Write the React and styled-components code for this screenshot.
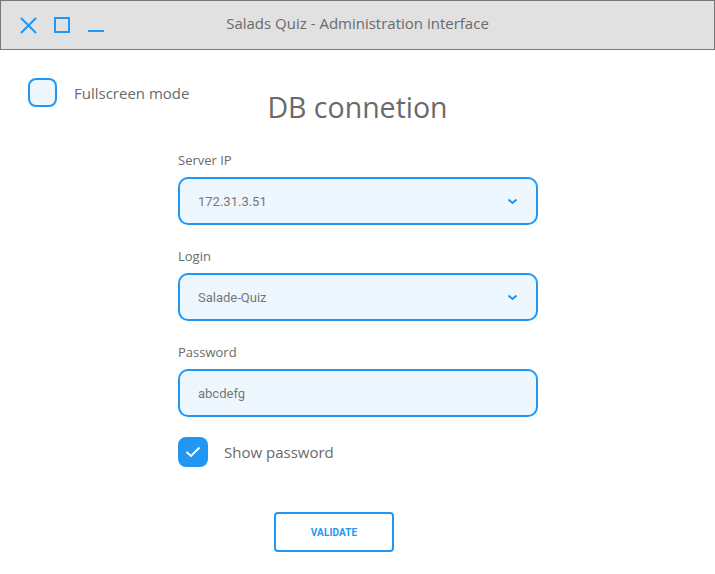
import React from "react";
import styled, { createGlobalStyle } from "styled-components";

const Global = createGlobalStyle`
  html, body {
    margin: 0;
    padding: 0;
    background: #fff;
  }
  body {
    font-family: "Open Sans", "Noto Sans", sans-serif;
    color: #666;
  }
`;

const Window = styled.div`
  width: 715px;
  height: 574px;
  box-sizing: border-box;
  display: flex;
  flex-direction: column;
`;

const TitleBar = styled.div`
  height: 50px;
  box-sizing: border-box;
  border: 1px solid #777;
  background: #e1e1e1;
  display: flex;
  align-items: center;
  position: relative;
  padding-left: 19px;
`;

const Controls = styled.div`
  display: flex;
  align-items: center;
  gap: 17px;
`;

const WinButton = styled.svg`
  width: 17px;
  height: 17px;
  display: block;
`;

const Title = styled.div`
  position: absolute;
  left: 0;
  right: 0;
  text-align: center;
  font-size: 15px;
  color: #6a6a6a;
  pointer-events: none;
  top: 12px;
`;

const Body = styled.div`
  position: relative;
  flex: 1;
`;

const CheckRow = styled.label`
  display: flex;
  align-items: center;
  gap: ${(p) => p.gap || 16}px;
  font-size: 15px;
  color: #6a6a6a;
`;

const FullscreenRow = styled(CheckRow)`
  position: absolute;
  left: 28px;
  top: 28px;
`;

const Box = styled.span`
  width: ${(p) => p.size}px;
  height: ${(p) => p.size}px;
  box-sizing: border-box;
  border-radius: 8px;
  border: 2px solid #2196f3;
  background: ${(p) => (p.checked ? "#2196f3" : "#eef6fe")};
  display: flex;
  align-items: center;
  justify-content: center;
`;

const Heading = styled.h1`
  margin: 38px 0 0;
  text-align: center;
  font-weight: 400;
  font-size: 28.5px;
  color: #6a6a6a;
  line-height: 38px;
`;

const Form = styled.div`
  width: 360px;
  margin: 25px auto 0 178px;
  display: flex;
  flex-direction: column;
`;

const Label = styled.div`
  font-size: 13px;
  line-height: 18px;
  color: #6a6a6a;
  margin-bottom: 8px;
`;

const Field = styled.div`
  height: 48px;
  box-sizing: border-box;
  border: 2px solid #2196f3;
  border-radius: 10px;
  background: #eff7fe;
  display: flex;
  align-items: center;
  justify-content: space-between;
  padding: 0 ${(p) => (p.select ? 18 : 0)}px 0 18px;
  font-family: Roboto, "Liberation Sans", sans-serif;
  font-size: 13px;
  color: #777;
  margin-bottom: 22px;
`;

const ShowRow = styled(CheckRow)`
  margin-top: -2px;
`;

const Validate = styled.button`
  width: 120px;
  height: 40px;
  margin: 45px 0 0 96px;
  box-sizing: border-box;
  border: 2px solid #2196f3;
  border-radius: 4px;
  background: #fff;
  color: #2196f3;
  font-family: Roboto, "Liberation Sans", sans-serif;
  font-weight: 700;
  font-size: 10px;
  letter-spacing: 0.1px;
`;

const Chevron = () => (
  <svg width="11" height="7" viewBox="0 0 11 7">
    <path d="M1.5 1.5 L5.5 5 L9.5 1.5" fill="none" stroke="#2196f3" strokeWidth="2" />
  </svg>
);

export default function App() {
  return (
    <Window>
      <Global />
      <TitleBar>
        <Controls>
          <WinButton viewBox="0 0 17 17">
            <path d="M1 1 L16 16 M16 1 L1 16" stroke="#2196f3" strokeWidth="2" />
          </WinButton>
          <WinButton viewBox="0 0 17 17">
            <rect x="1" y="1" width="14" height="14" fill="none" stroke="#2196f3" strokeWidth="2" />
          </WinButton>
          <WinButton viewBox="0 0 17 17">
            <path d="M0 14 L16 14" stroke="#2196f3" strokeWidth="2" />
          </WinButton>
        </Controls>
        <Title>Salads Quiz - Administration interface</Title>
      </TitleBar>
      <Body>
        <FullscreenRow gap={17}>
          <Box size={29} />
          Fullscreen mode
        </FullscreenRow>
        <Heading>DB connetion</Heading>
        <Form>
          <Label>Server IP</Label>
          <Field select>
            172.31.3.51
            <Chevron />
          </Field>
          <Label>Login</Label>
          <Field select>
            Salade-Quiz
            <Chevron />
          </Field>
          <Label>Password</Label>
          <Field>abcdefg</Field>
          <ShowRow gap={16}>
            <Box size={30} checked>
              <svg width="16" height="12" viewBox="0 0 16 12">
                <path d="M1.5 6 L6 10 L14.5 1.5" fill="none" stroke="#fff" strokeWidth="2" />
              </svg>
            </Box>
            Show password
          </ShowRow>
          <Validate>VALIDATE</Validate>
        </Form>
      </Body>
    </Window>
  );
}
